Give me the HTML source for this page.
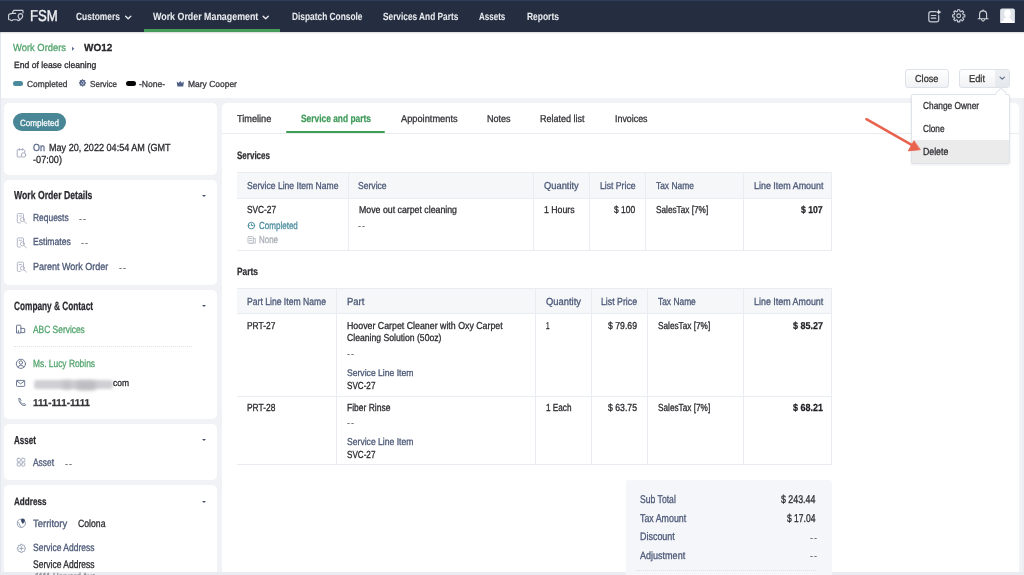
<!DOCTYPE html><html><head><meta charset="utf-8"><style>
html,body{margin:0;padding:0;width:1024px;height:575px;overflow:hidden;background:#fff}
body{position:relative;font-family:"Liberation Sans",sans-serif;text-rendering:geometricPrecision}
.b{position:absolute}
.t{position:absolute;white-space:nowrap;line-height:normal;transform-origin:0 0}
.card{background:#fff;border-radius:5px}
.btn{background:linear-gradient(#fff,#f1f2f5);border:1px solid #dde1e8;box-sizing:border-box;border-radius:3px}
svg{position:absolute;overflow:visible}
</style></head><body>
<div class="b" style="left:0;top:0;width:1024px;height:32.3px;background:#252e40"></div>
<div class="b" style="left:0;top:0;width:1024px;height:1px;background:#2f3d58"></div>
<div class="b" style="left:144px;top:29.3px;width:136px;height:2.9px;background:#479c59"></div>
<div class="b" style="left:0;top:32px;width:1024px;height:66px;background:#fff"></div>
<div class="b" style="left:0;top:98px;width:1024px;height:477px;background:#f0f2f5"></div>
<div class="b" style="left:0;top:32px;width:1px;height:543px;background:#e3e8f0"></div>
<div class="b" style="left:1022px;top:98px;width:2px;height:477px;background:#eceef2"></div>
<div class="b" style="left:0;top:32px;width:1024px;height:1.5px;background:linear-gradient(rgba(37,45,63,.18),rgba(37,45,63,0))"></div>
<div class="b card" style="left:4px;top:103.0px;width:213.2px;height:71.8px"></div>
<div class="b card" style="left:4px;top:179.8px;width:213.2px;height:104.9px"></div>
<div class="b card" style="left:4px;top:289.6px;width:213.2px;height:129.2px"></div>
<div class="b card" style="left:4px;top:423.9px;width:213.2px;height:55.9px"></div>
<div class="b card" style="left:4px;top:485.0px;width:213.2px;height:115.0px"></div>
<div class="b card" style="left:222px;top:103px;width:797px;height:520px"></div>
<div class="b" style="left:222px;top:133px;width:797px;height:1px;background:#e9ecf0"></div>
<div class="b" style="left:286px;top:130.5px;width:99px;height:2.5px;background:#3d9e55;border-radius:1px"></div>
<div class="b" style="left:0;top:572px;width:1024px;height:3px;background:#e9ecf1"></div>
<div class="t" style="left:29.60px;top:7.65px;font-size:15.75px;transform:scaleX(0.8361);font-weight:400;color:#f2f3f5;-webkit-text-stroke:0.40px #f2f3f5">FSM</div>
<div class="t" style="left:76.10px;top:10.70px;font-size:10.5px;transform:scaleX(0.8004);font-weight:700;color:#e9ebef;-webkit-text-stroke:0.05px #e9ebef">Customers</div>
<div class="t" style="left:153.10px;top:10.70px;font-size:10.5px;transform:scaleX(0.8448);font-weight:700;color:#e9ebef;-webkit-text-stroke:0.05px #e9ebef">Work Order Management</div>
<div class="t" style="left:291.80px;top:10.70px;font-size:10.5px;transform:scaleX(0.7948);font-weight:700;color:#e9ebef;-webkit-text-stroke:0.05px #e9ebef">Dispatch Console</div>
<div class="t" style="left:383.20px;top:10.70px;font-size:10.5px;transform:scaleX(0.7897);font-weight:700;color:#e9ebef;-webkit-text-stroke:0.05px #e9ebef">Services And Parts</div>
<div class="t" style="left:479.40px;top:10.70px;font-size:10.5px;transform:scaleX(0.7634);font-weight:700;color:#e9ebef;-webkit-text-stroke:0.05px #e9ebef">Assets</div>
<div class="t" style="left:526.50px;top:10.70px;font-size:10.5px;transform:scaleX(0.8045);font-weight:700;color:#e9ebef;-webkit-text-stroke:0.05px #e9ebef">Reports</div>
<div class="t" style="left:13.30px;top:42.92px;font-size:10.25px;transform:scaleX(0.9154);font-weight:400;color:#52a46c;-webkit-text-stroke:0.30px #52a46c">Work Orders</div>
<div class="t" style="left:84.00px;top:42.92px;font-size:10.25px;transform:scaleX(0.9742);font-weight:700;color:#26262b;-webkit-text-stroke:0.25px #26262b">WO12</div>
<div class="t" style="left:13.80px;top:59.96px;font-size:9.0px;transform:scaleX(0.9553);font-weight:400;color:#2b2b30;-webkit-text-stroke:0.30px #2b2b30">End of lease cleaning</div>
<div class="t" style="left:26.50px;top:78.58px;font-size:8.75px;transform:scaleX(0.9574);font-weight:400;color:#3a3a40;-webkit-text-stroke:0.30px #3a3a40">Completed</div>
<div class="t" style="left:89.80px;top:78.58px;font-size:8.75px;transform:scaleX(0.9247);font-weight:400;color:#3a3a40;-webkit-text-stroke:0.30px #3a3a40">Service</div>
<div class="t" style="left:139.00px;top:78.58px;font-size:8.75px;transform:scaleX(0.9794);font-weight:400;color:#3a3a40;-webkit-text-stroke:0.30px #3a3a40">-None-</div>
<div class="t" style="left:187.80px;top:78.58px;font-size:8.75px;transform:scaleX(0.9674);font-weight:400;color:#3a3a40;-webkit-text-stroke:0.30px #3a3a40">Mary Cooper</div>
<div class="b" style="left:13px;top:80.8px;width:10px;height:5.4px;border-radius:3px;background:#4b8a9c"></div>
<div class="b" style="left:126.2px;top:80.8px;width:9.6px;height:5.4px;border-radius:3px;background:#050505"></div>
<div class="b btn" style="left:905px;top:69px;width:44px;height:19px"></div>
<div class="b btn" style="left:958.6px;top:69px;width:51px;height:19px"></div>
<div class="b" style="left:995px;top:70px;width:13.6px;height:17px;background:linear-gradient(#eef0f3,#e4e7ec);border-radius:0 2px 2px 0"></div>
<div class="t" style="left:915.00px;top:73.65px;font-size:10.0px;transform:scaleX(0.9159);font-weight:400;color:#333;-webkit-text-stroke:0.30px #333">Close</div>
<div class="t" style="left:969.00px;top:73.65px;font-size:10.0px;transform:scaleX(0.9275);font-weight:400;color:#333;-webkit-text-stroke:0.30px #333">Edit</div>
<div class="b" style="left:13.3px;top:113px;width:52.3px;height:18px;border-radius:9px;background:#4a8796"></div>
<div class="t" style="left:20.00px;top:117.76px;font-size:9.0px;transform:scaleX(0.8966);font-weight:400;color:#f4f8f9;-webkit-text-stroke:0.30px #f4f8f9">Completed</div>
<div class="t" style="left:33.00px;top:143.22px;font-size:10.25px;transform:scaleX(0.8791);font-weight:400;color:#5b6a8c;-webkit-text-stroke:0.30px #5b6a8c">On</div>
<div class="t" style="left:48.60px;top:143.22px;font-size:10.25px;transform:scaleX(0.8857);font-weight:400;color:#2b2b30;-webkit-text-stroke:0.30px #2b2b30">May 20, 2022 04:54 AM (GMT</div>
<div class="t" style="left:33.00px;top:155.22px;font-size:10.25px;transform:scaleX(0.8923);font-weight:400;color:#2b2b30;-webkit-text-stroke:0.30px #2b2b30">-07:00)</div>
<div class="t" style="left:13.60px;top:189.59px;font-size:11.5px;transform:scaleX(0.7542);font-weight:700;color:#2a2a30;-webkit-text-stroke:0.25px #2a2a30">Work Order Details</div>
<div class="t" style="left:33.40px;top:212.92px;font-size:10.25px;transform:scaleX(0.8222);font-weight:400;color:#4b5877;-webkit-text-stroke:0.30px #4b5877">Requests</div>
<div class="t" style="left:78.70px;top:213.85px;font-size:9px;letter-spacing:0.9px;transform:scaleX(0.999);color:#444;-webkit-text-stroke:0.15px #444">--</div>
<div class="t" style="left:33.40px;top:237.42px;font-size:10.25px;transform:scaleX(0.8400);font-weight:400;color:#4b5877;-webkit-text-stroke:0.30px #4b5877">Estimates</div>
<div class="t" style="left:81.00px;top:238.35px;font-size:9px;letter-spacing:0.9px;transform:scaleX(0.999);color:#444;-webkit-text-stroke:0.15px #444">--</div>
<div class="t" style="left:33.40px;top:261.72px;font-size:10.25px;transform:scaleX(0.8776);font-weight:400;color:#4b5877;-webkit-text-stroke:0.30px #4b5877">Parent Work Order</div>
<div class="t" style="left:118.70px;top:262.66px;font-size:9px;letter-spacing:0.9px;transform:scaleX(0.999);color:#444;-webkit-text-stroke:0.15px #444">--</div>
<div class="t" style="left:13.50px;top:299.14px;font-size:12.0px;transform:scaleX(0.6896);font-weight:700;color:#2a2a30;-webkit-text-stroke:0.25px #2a2a30">Company &amp; Contact</div>
<div class="t" style="left:33.00px;top:323.60px;font-size:10.5px;transform:scaleX(0.8000);font-weight:400;color:#52a46c;-webkit-text-stroke:0.30px #52a46c">ABC Services</div>
<div class="b" style="left:13.5px;top:345.5px;width:178px;height:0;border-top:1px dotted #dfe2e7"></div>
<div class="t" style="left:33.00px;top:358.20px;font-size:10.5px;transform:scaleX(0.7990);font-weight:400;color:#52a46c;-webkit-text-stroke:0.30px #52a46c">Ms. Lucy Robins</div>
<div class="b" style="left:33.5px;top:379.5px;width:79px;height:9.5px;background:#d0d0d4;filter:blur(1.8px);border-radius:3px"></div>
<div class="b" style="left:62px;top:380.5px;width:10px;height:8px;background:#c2c2c7;filter:blur(2px);border-radius:3px"></div>
<div class="b" style="left:76px;top:380.5px;width:20px;height:9px;background:#bcbcc1;filter:blur(2.2px);border-radius:4px"></div>
<div class="t" style="left:113.00px;top:378.28px;font-size:9.3px;transform:scaleX(0.9117);font-weight:400;color:#2b2b30;-webkit-text-stroke:0.30px #2b2b30">com</div>
<div class="t" style="left:33.40px;top:397.85px;font-size:10.0px;transform:scaleX(0.9760);font-weight:700;color:#333338;-webkit-text-stroke:0.25px #333338">111-111-1111</div>
<div class="t" style="left:13.60px;top:434.79px;font-size:11.5px;transform:scaleX(0.6997);font-weight:700;color:#2a2a30;-webkit-text-stroke:0.25px #2a2a30">Asset</div>
<div class="t" style="left:33.30px;top:457.37px;font-size:10.75px;transform:scaleX(0.7807);font-weight:400;color:#4b5877;-webkit-text-stroke:0.30px #4b5877">Asset</div>
<div class="t" style="left:64.50px;top:458.75px;font-size:9px;letter-spacing:0.9px;transform:scaleX(0.999);color:#444;-webkit-text-stroke:0.15px #444">--</div>
<div class="t" style="left:13.60px;top:495.80px;font-size:10.5px;transform:scaleX(0.7714);font-weight:700;color:#2a2a30;-webkit-text-stroke:0.25px #2a2a30">Address</div>
<div class="t" style="left:33.30px;top:518.20px;font-size:10.5px;transform:scaleX(0.9024);font-weight:400;color:#4b5877;-webkit-text-stroke:0.30px #4b5877">Territory</div>
<div class="t" style="left:77.80px;top:518.20px;font-size:10.5px;transform:scaleX(0.8258);font-weight:400;color:#2b2b30;-webkit-text-stroke:0.30px #2b2b30">Colona</div>
<div class="t" style="left:33.30px;top:541.80px;font-size:10.5px;transform:scaleX(0.8108);font-weight:400;color:#4b5877;-webkit-text-stroke:0.30px #4b5877">Service Address</div>
<div class="t" style="left:33.30px;top:559.45px;font-size:11.0px;transform:scaleX(0.7736);font-weight:400;color:#2b2b30;-webkit-text-stroke:0.30px #2b2b30">Service Address</div>
<div class="t" style="left:35.20px;top:572.42px;font-size:10.25px;transform:scaleX(0.7663);font-weight:400;color:#8a8a90;-webkit-text-stroke:0.30px #8a8a90">1111 Harvard Ave</div>
<div class="b" style="left:201.5px;top:194.8px;width:0;height:0;border-left:2.2px solid transparent;border-right:2.2px solid transparent;border-top:2.5px solid #4b5570"></div>
<div class="b" style="left:201.5px;top:304.8px;width:0;height:0;border-left:2.2px solid transparent;border-right:2.2px solid transparent;border-top:2.5px solid #4b5570"></div>
<div class="b" style="left:201.5px;top:438.8px;width:0;height:0;border-left:2.2px solid transparent;border-right:2.2px solid transparent;border-top:2.5px solid #4b5570"></div>
<div class="b" style="left:201.5px;top:500.5px;width:0;height:0;border-left:2.2px solid transparent;border-right:2.2px solid transparent;border-top:2.5px solid #4b5570"></div>
<div class="t" style="left:237.30px;top:113.65px;font-size:10.0px;transform:scaleX(0.9171);font-weight:400;color:#333338;-webkit-text-stroke:0.30px #333338">Timeline</div>
<div class="t" style="left:301.00px;top:113.20px;font-size:10.5px;transform:scaleX(0.7984);font-weight:700;color:#3f9a5a;-webkit-text-stroke:0.25px #3f9a5a">Service and parts</div>
<div class="t" style="left:400.60px;top:113.65px;font-size:10.0px;transform:scaleX(0.9256);font-weight:400;color:#333338;-webkit-text-stroke:0.30px #333338">Appointments</div>
<div class="t" style="left:486.90px;top:113.65px;font-size:10.0px;transform:scaleX(0.9042);font-weight:400;color:#333338;-webkit-text-stroke:0.30px #333338">Notes</div>
<div class="t" style="left:540.20px;top:113.65px;font-size:10.0px;transform:scaleX(0.9019);font-weight:400;color:#333338;-webkit-text-stroke:0.30px #333338">Related list</div>
<div class="t" style="left:614.50px;top:113.65px;font-size:10.0px;transform:scaleX(0.8856);font-weight:400;color:#333338;-webkit-text-stroke:0.30px #333338">Invoices</div>
<div class="t" style="left:237.00px;top:149.57px;font-size:10.75px;transform:scaleX(0.7458);font-weight:700;color:#2e2e33;-webkit-text-stroke:0.25px #2e2e33">Services</div>
<div class="t" style="left:237.00px;top:266.40px;font-size:10.5px;transform:scaleX(0.8000);font-weight:700;color:#2e2e33;-webkit-text-stroke:0.25px #2e2e33">Parts</div>
<div class="b" style="left:237px;top:172px;width:595.4px;height:78.5px;border:1px solid #e9ecf0;border-left:0;box-sizing:border-box"></div>
<div class="b" style="left:237px;top:172px;width:595.4px;height:26.7px;background:#f6f7f9;border:1px solid #e9ecf0;border-left:0;box-sizing:border-box"></div>
<div class="b" style="left:347.9px;top:172px;width:1px;height:78.5px;background:#e9ecf0"></div>
<div class="b" style="left:533.2px;top:172px;width:1px;height:78.5px;background:#e9ecf0"></div>
<div class="b" style="left:588.6px;top:172px;width:1px;height:78.5px;background:#e9ecf0"></div>
<div class="b" style="left:645.3px;top:172px;width:1px;height:78.5px;background:#e9ecf0"></div>
<div class="b" style="left:743.2px;top:172px;width:1px;height:78.5px;background:#e9ecf0"></div>
<div class="t" style="left:246.60px;top:180.65px;font-size:10.0px;transform:scaleX(0.8566);font-weight:400;color:#4b5877;-webkit-text-stroke:0.30px #4b5877">Service Line Item Name</div>
<div class="t" style="left:358.40px;top:180.65px;font-size:10.0px;transform:scaleX(0.8576);font-weight:400;color:#4b5877;-webkit-text-stroke:0.30px #4b5877">Service</div>
<div class="t" style="left:544.20px;top:180.65px;font-size:10.0px;transform:scaleX(0.9342);font-weight:400;color:#4b5877;-webkit-text-stroke:0.30px #4b5877">Quantity</div>
<div class="t" style="left:599.70px;top:180.65px;font-size:10.0px;transform:scaleX(0.8637);font-weight:400;color:#4b5877;-webkit-text-stroke:0.30px #4b5877">List Price</div>
<div class="t" style="left:655.80px;top:180.65px;font-size:10.0px;transform:scaleX(0.8400);font-weight:400;color:#4b5877;-webkit-text-stroke:0.30px #4b5877">Tax Name</div>
<div class="t" style="left:753.60px;top:180.65px;font-size:10.0px;transform:scaleX(0.8920);font-weight:400;color:#4b5877;-webkit-text-stroke:0.30px #4b5877">Line Item Amount</div>
<div class="t" style="left:246.60px;top:204.62px;font-size:10.25px;transform:scaleX(0.8106);font-weight:400;color:#2b2b30;-webkit-text-stroke:0.30px #2b2b30">SVC-27</div>
<div class="t" style="left:259.00px;top:221.42px;font-size:10.25px;transform:scaleX(0.7830);font-weight:400;color:#4f8fa0;-webkit-text-stroke:0.30px #4f8fa0">Completed</div>
<div class="t" style="left:259.00px;top:235.42px;font-size:10.25px;transform:scaleX(0.7755);font-weight:400;color:#a9adb5;-webkit-text-stroke:0.30px #a9adb5">None</div>
<div class="t" style="left:358.60px;top:204.85px;font-size:10.0px;transform:scaleX(0.8770);font-weight:400;color:#2b2b30;-webkit-text-stroke:0.30px #2b2b30">Move out carpet cleaning</div>
<div class="t" style="left:358.30px;top:220.85px;font-size:9px;letter-spacing:0.9px;transform:scaleX(0.999);color:#444;-webkit-text-stroke:0.15px #444">--</div>
<div class="t" style="left:544.20px;top:204.85px;font-size:10.0px;transform:scaleX(0.8743);font-weight:400;color:#2b2b30;-webkit-text-stroke:0.30px #2b2b30">1 Hours</div>
<div class="t" style="left:614.00px;top:204.85px;font-size:10.0px;transform:scaleX(0.8463);font-weight:400;color:#2b2b30;-webkit-text-stroke:0.30px #2b2b30">$ 100</div>
<div class="t" style="left:655.60px;top:204.85px;font-size:10.0px;transform:scaleX(0.8240);font-weight:400;color:#2b2b30;-webkit-text-stroke:0.30px #2b2b30">SalesTax [7%]</div>
<div class="t" style="left:800.50px;top:204.85px;font-size:10.0px;transform:scaleX(0.8663);font-weight:700;color:#1f1f24;-webkit-text-stroke:0.25px #1f1f24">$ 107</div>
<div class="b" style="left:237px;top:288px;width:595px;height:177px;border:1px solid #e9ecf0;border-left:0;box-sizing:border-box"></div>
<div class="b" style="left:237px;top:288px;width:595px;height:26.3px;background:#f6f7f9;border:1px solid #e9ecf0;border-left:0;box-sizing:border-box"></div>
<div class="b" style="left:237px;top:396px;width:595px;height:1px;background:#e9ecf0"></div>
<div class="b" style="left:335.9px;top:288px;width:1px;height:177px;background:#e9ecf0"></div>
<div class="b" style="left:535.2px;top:288px;width:1px;height:177px;background:#e9ecf0"></div>
<div class="b" style="left:590.9px;top:288px;width:1px;height:177px;background:#e9ecf0"></div>
<div class="b" style="left:647.1px;top:288px;width:1px;height:177px;background:#e9ecf0"></div>
<div class="b" style="left:743.0px;top:288px;width:1px;height:177px;background:#e9ecf0"></div>
<div class="t" style="left:247.00px;top:297.22px;font-size:10.25px;transform:scaleX(0.8404);font-weight:400;color:#4b5877;-webkit-text-stroke:0.30px #4b5877">Part Line Item Name</div>
<div class="t" style="left:346.60px;top:297.22px;font-size:10.25px;transform:scaleX(0.9255);font-weight:400;color:#4b5877;-webkit-text-stroke:0.30px #4b5877">Part</div>
<div class="t" style="left:546.00px;top:297.22px;font-size:10.25px;transform:scaleX(0.9162);font-weight:400;color:#4b5877;-webkit-text-stroke:0.30px #4b5877">Quantity</div>
<div class="t" style="left:601.00px;top:297.22px;font-size:10.25px;transform:scaleX(0.8541);font-weight:400;color:#4b5877;-webkit-text-stroke:0.30px #4b5877">List Price</div>
<div class="t" style="left:657.50px;top:297.22px;font-size:10.25px;transform:scaleX(0.8191);font-weight:400;color:#4b5877;-webkit-text-stroke:0.30px #4b5877">Tax Name</div>
<div class="t" style="left:753.75px;top:297.22px;font-size:10.25px;transform:scaleX(0.8683);font-weight:400;color:#4b5877;-webkit-text-stroke:0.30px #4b5877">Line Item Amount</div>
<div class="t" style="left:247.00px;top:320.95px;font-size:10.0px;transform:scaleX(0.8398);font-weight:400;color:#2b2b30;-webkit-text-stroke:0.30px #2b2b30">PRT-27</div>
<div class="t" style="left:346.80px;top:320.85px;font-size:10px;transform:scaleX(0.8809);font-weight:400;color:#2b2b30;-webkit-text-stroke:0.30px #2b2b30">Hoover Carpet Cleaner with Oxy Carpet</div>
<div class="t" style="left:346.80px;top:333.05px;font-size:10px;transform:scaleX(0.8621);font-weight:400;color:#2b2b30;-webkit-text-stroke:0.30px #2b2b30">Cleaning Solution (50oz)</div>
<div class="t" style="left:346.50px;top:348.86px;font-size:9px;letter-spacing:0.9px;transform:scaleX(0.999);color:#444;-webkit-text-stroke:0.15px #444">--</div>
<div class="t" style="left:346.60px;top:367.70px;font-size:9.5px;transform:scaleX(0.9046);font-weight:400;color:#4b5877;-webkit-text-stroke:0.30px #4b5877">Service Line Item</div>
<div class="t" style="left:346.60px;top:380.62px;font-size:10.25px;transform:scaleX(0.7911);font-weight:400;color:#2b2b30;-webkit-text-stroke:0.30px #2b2b30">SVC-27</div>
<div class="t" style="left:546.00px;top:320.95px;font-size:10.0px;transform:scaleX(0.6306);font-weight:400;color:#2b2b30;-webkit-text-stroke:0.30px #2b2b30">1</div>
<div class="t" style="left:608.00px;top:320.95px;font-size:10.0px;transform:scaleX(0.8696);font-weight:400;color:#2b2b30;-webkit-text-stroke:0.30px #2b2b30">$ 79.69</div>
<div class="t" style="left:657.50px;top:320.95px;font-size:10.0px;transform:scaleX(0.8240);font-weight:400;color:#2b2b30;-webkit-text-stroke:0.30px #2b2b30">SalesTax [7%]</div>
<div class="t" style="left:793.00px;top:320.95px;font-size:10.0px;transform:scaleX(0.8996);font-weight:700;color:#1f1f24;-webkit-text-stroke:0.25px #1f1f24">$ 85.27</div>
<div class="t" style="left:247.00px;top:403.22px;font-size:10.25px;transform:scaleX(0.8191);font-weight:400;color:#2b2b30;-webkit-text-stroke:0.30px #2b2b30">PRT-28</div>
<div class="t" style="left:346.80px;top:403.22px;font-size:10.25px;transform:scaleX(0.8282);font-weight:400;color:#2b2b30;-webkit-text-stroke:0.30px #2b2b30">Fiber Rinse</div>
<div class="t" style="left:346.50px;top:417.86px;font-size:9px;letter-spacing:0.9px;transform:scaleX(0.999);color:#444;-webkit-text-stroke:0.15px #444">--</div>
<div class="t" style="left:346.60px;top:437.05px;font-size:10.0px;transform:scaleX(0.8595);font-weight:400;color:#4b5877;-webkit-text-stroke:0.30px #4b5877">Service Line Item</div>
<div class="t" style="left:346.60px;top:450.22px;font-size:10.25px;transform:scaleX(0.7911);font-weight:400;color:#2b2b30;-webkit-text-stroke:0.30px #2b2b30">SVC-27</div>
<div class="t" style="left:546.00px;top:403.22px;font-size:10.25px;transform:scaleX(0.7994);font-weight:400;color:#2b2b30;-webkit-text-stroke:0.30px #2b2b30">1 Each</div>
<div class="t" style="left:608.00px;top:403.22px;font-size:10.25px;transform:scaleX(0.8480);font-weight:400;color:#2b2b30;-webkit-text-stroke:0.30px #2b2b30">$ 63.75</div>
<div class="t" style="left:657.50px;top:403.22px;font-size:10.25px;transform:scaleX(0.8037);font-weight:400;color:#2b2b30;-webkit-text-stroke:0.30px #2b2b30">SalesTax [7%]</div>
<div class="t" style="left:793.00px;top:403.22px;font-size:10.25px;transform:scaleX(0.8772);font-weight:700;color:#1f1f24;-webkit-text-stroke:0.25px #1f1f24">$ 68.21</div>
<div class="b" style="left:626px;top:480px;width:206px;height:100px;background:#f5f6f9;border-radius:3px"></div>
<div class="b" style="left:636px;top:569.5px;width:180px;height:0;border-top:1px dotted #dde0e6"></div>
<div class="t" style="left:639.80px;top:493.72px;font-size:11.25px;transform:scaleX(0.7666);font-weight:400;color:#4b5877;-webkit-text-stroke:0.30px #4b5877">Sub Total</div>
<div class="t" style="left:781.00px;top:493.72px;font-size:11.25px;transform:scaleX(0.7854);font-weight:400;color:#2b2b30;-webkit-text-stroke:0.30px #2b2b30">$ 243.44</div>
<div class="t" style="left:639.80px;top:513.22px;font-size:11.25px;transform:scaleX(0.7857);font-weight:400;color:#4b5877;-webkit-text-stroke:0.30px #4b5877">Tax Amount</div>
<div class="t" style="left:787.00px;top:513.22px;font-size:11.25px;transform:scaleX(0.7563);font-weight:400;color:#2b2b30;-webkit-text-stroke:0.30px #2b2b30">$ 17.04</div>
<div class="t" style="left:639.80px;top:531.25px;font-size:11.0px;transform:scaleX(0.8131);font-weight:400;color:#4b5877;-webkit-text-stroke:0.30px #4b5877">Discount</div>
<div class="t" style="left:809.70px;top:532.86px;font-size:9px;letter-spacing:0.9px;transform:scaleX(0.999);color:#444;-webkit-text-stroke:0.15px #444">--</div>
<div class="t" style="left:639.80px;top:550.00px;font-size:10.5px;transform:scaleX(0.8601);font-weight:400;color:#4b5877;-webkit-text-stroke:0.30px #4b5877">Adjustment</div>
<div class="t" style="left:809.70px;top:551.15px;font-size:9px;letter-spacing:0.9px;transform:scaleX(0.999);color:#444;-webkit-text-stroke:0.15px #444">--</div>
<div class="b" style="left:910.5px;top:93.5px;width:99.5px;height:70px;background:#fff;border:1px solid #dfe3ea;box-sizing:border-box;border-radius:2px;box-shadow:0 1px 3px rgba(0,0,0,.08)"></div>
<div class="b" style="left:997px;top:89px;width:7px;height:7px;background:#fff;border-left:1px solid #dfe3ea;border-top:1px solid #dfe3ea;transform:rotate(45deg)"></div>
<div class="b" style="left:911.5px;top:140px;width:97.5px;height:22.5px;background:#ebebeb"></div>
<div class="t" style="left:922.50px;top:100.85px;font-size:10.0px;transform:scaleX(0.8342);font-weight:400;color:#303035;-webkit-text-stroke:0.30px #303035">Change Owner</div>
<div class="t" style="left:922.50px;top:123.65px;font-size:10.0px;transform:scaleX(0.8222);font-weight:400;color:#303035;-webkit-text-stroke:0.30px #303035">Clone</div>
<div class="t" style="left:922.50px;top:147.42px;font-size:10.25px;transform:scaleX(0.8533);font-weight:400;color:#303035;-webkit-text-stroke:0.30px #303035">Delete</div>
<svg style="left:0;top:0" width="1024" height="575" viewBox="0 0 1024 575" fill="none" stroke-linecap="round" stroke-linejoin="round">
<!-- truck logo -->
<g stroke="#cdd1d9" stroke-width="1.15">
<path d="M12.4 13.2 L13.1 11.2 Q13.4 10.4 14.3 10.4 L22.4 10.4 Q23 10.4 23 11 L23 12.8"/>
<path d="M15.6 13.4 L12 13.4 L9.4 14.1 Q8.6 14.4 8.6 15.2 L8.6 19.1 Q8.6 19.7 9.2 19.7 L10.5 19.7 Q11.7 21.6 12.9 19.7 L17.2 19.7 Q18.4 21.6 19.5 19.7"/>
<path d="M19.9 19.9 L18.6 17.6 Q18 16.6 18.2 15.6 Q18.7 13.6 20.5 13.6 Q22.6 13.7 22.7 15.8 Q22.7 16.8 22.1 17.7 Z"/>
</g>
<!-- nav chevrons -->
<g stroke="#eceef2" stroke-width="1.3">
<path d="M125.6 16.3 L128.2 18.7 L130.8 16.3"/>
<path d="M263.1 16.3 L265.7 18.7 L268.3 16.3"/>
</g>
<!-- note+ icon -->
<g stroke="#c9cdd6" stroke-width="1.2">
<path d="M936 11.6 L931 11.6 Q928.8 11.6 928.8 13.8 L928.8 19.7 Q928.8 21.8 931 21.8 L936.6 21.8 Q938.7 21.8 938.7 19.7 L938.7 15.6"/>
<path d="M931.3 15.5 L935.8 15.5 M931.3 18.2 L935.8 18.2"/>
</g>
<path d="M938.7 9.3 L939.5 11.3 L941.5 12.1 L939.5 12.9 L938.7 14.9 L937.9 12.9 L935.9 12.1 L937.9 11.3 Z" fill="#e4e6ea"/>
<!-- gear -->
<g stroke="#c9cdd6" stroke-width="1.1">
<path d="M957.52 11.35 L957.65 9.69 L959.75 9.69 L959.88 11.35 L961.01 11.82 L962.28 10.74 L963.76 12.22 L962.68 13.49 L963.15 14.62 L964.81 14.75 L964.81 16.85 L963.15 16.98 L962.68 18.11 L963.76 19.38 L962.28 20.86 L961.01 19.78 L959.88 20.25 L959.75 21.91 L957.65 21.91 L957.52 20.25 L956.39 19.78 L955.12 20.86 L953.64 19.38 L954.72 18.11 L954.25 16.98 L952.59 16.85 L952.59 14.75 L954.25 14.62 L954.72 13.49 L953.64 12.22 L955.12 10.74 L956.39 11.82 Z"/>
<circle cx="958.7" cy="15.8" r="1.9"/>
</g>
<!-- bell -->
<g stroke="#d3d6dd" stroke-width="1.1">
<path d="M979.6 18.6 L979.6 14.2 Q979.6 10.9 983.1 10.9 Q986.6 10.9 986.6 14.2 L986.6 18.6"/>
<path d="M978.2 18.7 L988.1 18.7"/>
<path d="M981.4 19.6 Q983.1 22.6 984.8 19.6"/>
</g>
<circle cx="983.1" cy="10.2" r="0.8" fill="#d3d6dd"/>
<!-- avatar -->
<rect x="1000.1" y="8.5" width="14.8" height="14.5" rx="2" fill="#dfe3ea"/>
<ellipse cx="1007.5" cy="13.4" rx="3.3" ry="3.9" fill="#fff"/>
<path d="M1003.3 23 L1003.3 20.2 Q1003.6 17.8 1006.2 17.2 L1008.8 17.2 Q1011.4 17.8 1011.7 20.2 L1011.7 23 Z" fill="#fff"/>
<rect x="1000.1" y="21.2" width="14.8" height="1.8" rx="1" fill="#fdfdfe"/>
<!-- breadcrumb chevron -->
<path d="M72 46.8 L74.3 48.8 L72 50.8 Z" fill="#5d6a8f"/>
<!-- service tag icon -->
<path d="M81.81 80.29 L81.89 79.35 L83.11 79.35 L83.19 80.29 L83.85 80.56 L84.58 79.96 L85.44 80.82 L84.84 81.55 L85.11 82.21 L86.05 82.29 L86.05 83.51 L85.11 83.59 L84.84 84.25 L85.44 84.98 L84.58 85.84 L83.85 85.24 L83.19 85.51 L83.11 86.45 L81.89 86.45 L81.81 85.51 L81.15 85.24 L80.42 85.84 L79.56 84.98 L80.16 84.25 L79.89 83.59 L78.95 83.51 L78.95 82.29 L79.89 82.21 L80.16 81.55 L79.56 80.82 L80.42 79.96 L81.15 80.56 Z" fill="#56668b" stroke="none"/>
<circle cx="82.5" cy="82.9" r="2.9" fill="#56668b"/>
<path d="M82.4 81.4 Q84 81.5 84 83 Q83.8 84.5 82.3 84.4 Q81.1 84.2 81.3 83" stroke="#dfe3ea" stroke-width="0.7"/>
<!-- crown -->
<path d="M176.7 81.6 L178.8 83.1 L180.3 81 L181.8 83.1 L183.9 81.6 L183.2 86.5 L177.4 86.5 Z" fill="#4e6085"/>
<!-- dropdown chevron on Edit -->
<path d="M1000 77.1 L1002.2 79.1 L1004.4 77.1" stroke="#5b6a8a" stroke-width="1.1"/>
<!-- calendar icon -->
<g stroke="#a4abbe" stroke-width="1">
<path d="M23.5 149.6 L18 149.6 Q17.2 149.6 17.2 150.4 L17.2 156.2 Q17.2 157 18 157 L21.2 157"/>
<path d="M19.4 148.6 L19.4 150.2 M22.6 148.6 L22.6 150.2 M24.8 152.5 L24.8 150.3"/>
<circle cx="23.5" cy="155" r="2.2"/>
</g>
<!-- doc search icons -->
<g stroke="#b0b7c6" stroke-width="1">
<path id="ds" d="M23.5 219.5 L23.5 214.6 Q23.5 213.6 22.5 213.6 L18.3 213.6 Q17.3 213.6 17.3 214.6 L17.3 221.8 Q17.3 222.8 18.3 222.8 L20.3 222.8 M19.2 216 L21.5 216"/>
<circle cx="22.4" cy="219.6" r="2"/><path d="M23.9 221.2 L26.4 223.4"/>
<path d="M23.5 243.8 L23.5 238.9 Q23.5 237.9 22.5 237.9 L18.3 237.9 Q17.3 237.9 17.3 238.9 L17.3 246.1 Q17.3 247.1 18.3 247.1 L20.3 247.1 M19.2 240.3 L21.5 240.3"/>
<circle cx="22.4" cy="243.9" r="2"/><path d="M23.9 245.5 L26.4 247.7"/>
<path d="M23.5 268.1 L23.5 263.2 Q23.5 262.2 22.5 262.2 L18.3 262.2 Q17.3 262.2 17.3 263.2 L17.3 270.4 Q17.3 271.4 18.3 271.4 L20.3 271.4 M19.2 264.6 L21.5 264.6"/>
<circle cx="22.4" cy="268.2" r="2"/><path d="M23.9 269.8 L26.4 272"/>
</g>
<!-- building -->
<g stroke="#6d7892" stroke-width="1">
<path d="M16.5 332.6 L16.5 325.8 Q16.5 325.2 17.1 325.2 L20.3 325.2 Q20.9 325.2 20.9 325.8 L20.9 332.6 Z"/>
<path d="M20.9 328.4 L24.2 328.4 Q24.7 328.4 24.7 328.9 L24.7 332.6 L20.9 332.6"/>
<path d="M18.4 330.6 L18.4 332.6"/>
</g>
<!-- user -->
<g stroke="#6d7892" stroke-width="1">
<circle cx="20.9" cy="363.8" r="4.6"/>
<circle cx="20.9" cy="362.5" r="1.7"/>
<path d="M18 367.3 Q18.6 365.2 20.9 365.2 Q23.2 365.2 23.8 367.3"/>
</g>
<!-- mail -->
<g stroke="#6d7892" stroke-width="1">
<rect x="16.5" y="380.4" width="8.2" height="6" rx="0.8"/>
<path d="M16.8 381 L20.6 383.8 L24.4 381"/>
</g>
<!-- phone -->
<path d="M18.9 398.8 L20.2 398.6 L21 400.6 L20.2 401.6 Q21.3 403.5 23 404.3 L23.9 403.5 L25.6 404.5 L25.2 405.6 Q22.3 406 20.3 403.4 Q18.5 401.2 18.9 398.8 Z" stroke="#6d7892" stroke-width="0.9"/>
<!-- asset -->
<g stroke="#a5adbf" stroke-width="1">
<rect x="17.2" y="458.3" width="3.2" height="3.4" rx="1"/>
<rect x="21.6" y="458.3" width="3.2" height="3.4" rx="1"/>
<rect x="17.2" y="462.7" width="3.2" height="3.4" rx="1"/>
<rect x="21.6" y="462.7" width="3.2" height="3.4" rx="1"/>
</g>
<!-- territory -->
<g stroke="#8d96ab" stroke-width="0.9">
<circle cx="21.4" cy="523.3" r="4.1"/>
<path d="M17.6 522 Q19.5 523 19.8 525.2 Q20.5 526.5 21.2 527.3"/>
</g>
<path d="M22 518.4 Q25 518.2 25 520.6 Q25 522 22.8 524 Q21.2 522.2 21 520.8 Q21 518.6 22 518.4 Z" fill="#3f4d6d"/>
<!-- service address -->
<g stroke="#8d96ab" stroke-width="0.8">
<path d="M20.55 545.21 L20.69 544.26 L22.11 544.26 L22.25 545.21 L23.06 545.55 L23.82 544.97 L24.83 545.98 L24.25 546.74 L24.59 547.55 L25.54 547.69 L25.54 549.11 L24.59 549.25 L24.25 550.06 L24.83 550.82 L23.82 551.83 L23.06 551.25 L22.25 551.59 L22.11 552.54 L20.69 552.54 L20.55 551.59 L19.74 551.25 L18.98 551.83 L17.97 550.82 L18.55 550.06 L18.21 549.25 L17.26 549.11 L17.26 547.69 L18.21 547.55 L18.55 546.74 L17.97 545.98 L18.98 544.97 L19.74 545.55 Z"/>
<path d="M19.6 548.4 L23.2 548.4 M21.4 546.6 L21.4 550.2"/>
</g>
<!-- completed clock in table -->
<g stroke="#4f8fa0" stroke-width="1">
<circle cx="251.4" cy="225.6" r="3.3"/>
<path d="M251.4 223.9 L251.4 225.6 L253 225.6 M248.3 225.6 L249.4 225.6"/>
</g>
<!-- none icon -->
<g stroke="#bcc0c8" stroke-width="1">
<rect x="248" y="236.6" width="5.4" height="6.6" rx="0.8"/>
<path d="M249.3 238.6 L252.1 238.6 M249.3 240.6 L252.1 240.6 M253.4 238.5 L255.3 238.5 L255.3 243.2 L250 243.2"/>
</g>
<!-- red arrow -->
<path d="M866.4 119.2 L912.5 145.4" stroke="#e8624e" stroke-width="2.5"/>
<path d="M920 149.7 L908.2 150.9 L913.9 141.1 Z" fill="#e8624e" stroke="#e8624e" stroke-width="0.8" />
</svg>
</body></html>
